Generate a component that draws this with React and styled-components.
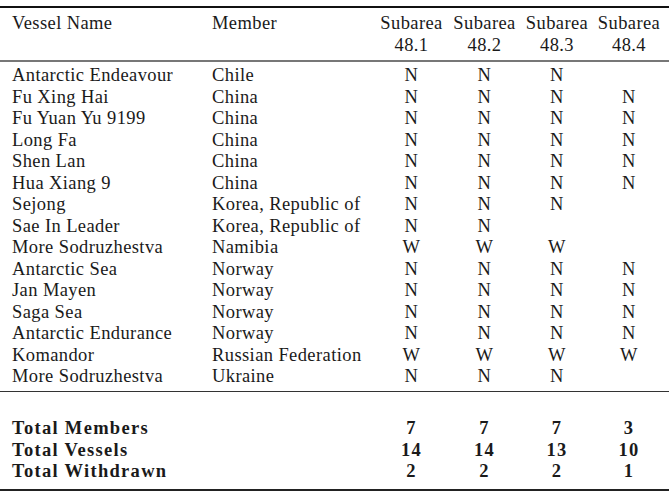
import React from 'react'
import styled, { createGlobalStyle } from 'styled-components'

const GlobalStyle = createGlobalStyle`
  html, body {
    margin: 0;
    padding: 0;
    background: #fff;
  }
  body {
    font-family: "Liberation Serif", "Times New Roman", serif;
    color: #1a1a1a;
  }
`

const serif = '"Liberation Serif", "Times New Roman", serif'

const vessels = [
  ['Antarctic Endeavour', 'Chile', 'N', 'N', 'N', ''],
  ['Fu Xing Hai', 'China', 'N', 'N', 'N', 'N'],
  ['Fu Yuan Yu 9199', 'China', 'N', 'N', 'N', 'N'],
  ['Long Fa', 'China', 'N', 'N', 'N', 'N'],
  ['Shen Lan', 'China', 'N', 'N', 'N', 'N'],
  ['Hua Xiang 9', 'China', 'N', 'N', 'N', 'N'],
  ['Sejong', 'Korea, Republic of', 'N', 'N', 'N', ''],
  ['Sae In Leader', 'Korea, Republic of', 'N', 'N', '', ''],
  ['More Sodruzhestva', 'Namibia', 'W', 'W', 'W', ''],
  ['Antarctic Sea', 'Norway', 'N', 'N', 'N', 'N'],
  ['Jan Mayen', 'Norway', 'N', 'N', 'N', 'N'],
  ['Saga Sea', 'Norway', 'N', 'N', 'N', 'N'],
  ['Antarctic Endurance', 'Norway', 'N', 'N', 'N', 'N'],
  ['Komandor', 'Russian Federation', 'W', 'W', 'W', 'W'],
  ['More Sodruzhestva', 'Ukraine', 'N', 'N', 'N', ''],
]

const totals = [
  ['Total Members', '7', '7', '7', '3'],
  ['Total Vessels', '14', '14', '13', '10'],
  ['Total Withdrawn', '2', '2', '2', '1'],
]

export default function App() {
  return (
    <>
      <GlobalStyle />
      <Page>
        <Table>
          <colgroup>
            <col style={{ width: 212 }} />
            <col style={{ width: 163 }} />
            <col style={{ width: 73 }} />
            <col style={{ width: 73 }} />
            <col style={{ width: 72 }} />
            <col style={{ width: 76 }} />
          </colgroup>
          <thead>
            <HeadRow>
              <HeadCell>Vessel Name</HeadCell>
              <HeadCell>Member</HeadCell>
              {['48.1', '48.2', '48.3', '48.4'].map((n) => (
                <HeadCell key={n} $center>
                  Subarea<br />{n}
                </HeadCell>
              ))}
            </HeadRow>
          </thead>
          <Body $rule="1.5px solid #333">
            {vessels.map((v, i) => (
              <Row key={i} $top={i === 0 ? 3 : 0} $bottom={i === vessels.length - 1 ? 3 : 0}>
                <Cell>{v[0]}</Cell>
                <Cell>{v[1]}</Cell>
                {v.slice(2).map((c, j) => (
                  <Cell key={j} $center>{c}</Cell>
                ))}
              </Row>
            ))}
          </Body>
          <Body $rule="2px solid #222">
            <SpacerRow><td colSpan={6} /></SpacerRow>
            {totals.map((t, i) => (
              <Row key={t[0]} $bottom={i === totals.length - 1 ? 6 : 0}>
                <Cell $bold colSpan={2}>{t[0]}</Cell>
                {t.slice(1).map((c, j) => (
                  <Cell key={j} $center $bold>{c}</Cell>
                ))}
              </Row>
            ))}
          </Body>
        </Table>
      </Page>
    </>
  )
}

const Page = styled.div`
  width: 669px;
  height: 492px;
  padding-top: 6px;
  box-sizing: border-box;
  overflow: hidden;
`

const Table = styled.table`
  width: 669px;
  border-collapse: collapse;
  table-layout: fixed;
  font-family: ${serif};
  font-size: 18.5px;
  letter-spacing: 0.4px;
  color: #1a1a1a;
`

const HeadRow = styled.tr`
  border-top: 2px solid #111;
  border-bottom: 2px solid #777;
`

const HeadCell = styled.th`
  font-family: ${serif};
  font-weight: normal;
  text-align: ${(p) => (p.$center ? 'center' : 'left')};
  vertical-align: top;
  line-height: 22px;
  padding: 4px 0 4px 0;
  white-space: nowrap;
  &:first-child {
    padding-left: 12px;
  }
  &:last-child {
    padding-right: 4px;
  }
`

const Body = styled.tbody`
  border-bottom: ${(p) => p.$rule};
`

const Row = styled.tr`
  height: 21.5px;
  & > td {
    padding-top: ${(p) => p.$top || 0}px;
    padding-bottom: ${(p) => p.$bottom || 0}px;
  }
`

const SpacerRow = styled.tr`
  height: 27px;
`

const Cell = styled.td`
  font-family: ${serif};
  text-align: ${(p) => (p.$center ? 'center' : 'left')};
  font-weight: ${(p) => (p.$bold ? 'bold' : 'normal')};
  letter-spacing: ${(p) => (p.$bold ? '1.3px' : '0.4px')};
  line-height: 21.5px;
  white-space: nowrap;
  padding-left: 0;
  padding-right: 0;
  &:first-child {
    padding-left: 12px;
  }
  &:last-child {
    padding-right: 4px;
  }
`
